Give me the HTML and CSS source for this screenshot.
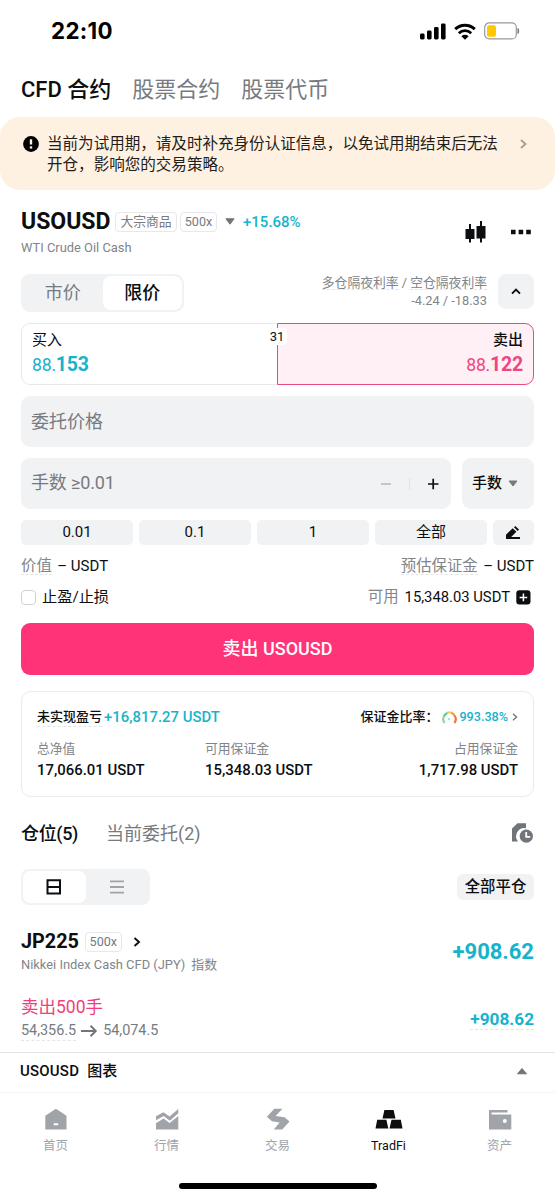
FILE: index.html
```html
<!DOCTYPE html>
<html lang="zh-CN">
<head>
<meta charset="utf-8">
<title>TradFi</title>
<link rel="stylesheet" href="styles.css">
</head>
<body>
<header class="status">
  <span class="time">22:10</span>
  <span class="status-icons">
    <svg width="26" height="17" viewBox="0 0 26 17"><rect x="0" y="10.5" width="4.6" height="6" rx="1.4"/><rect x="7" y="7.500" width="4.600" height="9" rx="1.400"/><rect x="14" y="4" width="4.600" height="12.500" rx="1.400"/><rect x="21" y="0.500" width="4.600" height="16" rx="1.400"/></svg>
    <svg width="22" height="17" viewBox="0 0 22 17"><path d="M1.200 6.200a14.200 14.200 0 0 1 19.600 0" fill="none" stroke="#000" stroke-width="3"/><path d="M4.800 10.200a9 9 0 0 1 12.400 0" fill="none" stroke="#000" stroke-width="2.800"/><path d="M7.400 13.200a5.200 5.200 0 0 1 7.200 0L11 16.800z"/></svg>
    <svg width="36" height="18" viewBox="0 0 36 18"><rect x="0.700" y="0.900" width="31.600" height="16" rx="4.500" fill="#fff" stroke="#999" stroke-width="1.200"/><rect x="3" y="3.200" width="9" height="11.500" rx="2" fill="#ffc800"/><path d="M34 6.500q1.600 2.500 0 5z" fill="#777" stroke="#777"/></svg>
  </span>
</header>

<nav class="top-tabs">
  <span class="top-tab active">CFD 合约</span><span class="top-tab">股票合约</span><span class="top-tab">股票代币</span>
</nav>

<section class="notice">
  <svg class="notice-icon" width="16" height="16" viewBox="0 0 16 16"><circle cx="8" cy="8" r="7.900"/><path d="M8 3.300v5.200" stroke="#fff3e4" stroke-width="2.400"/><path d="M8 10.300v2.300" stroke="#fff3e4" stroke-width="2.400"/></svg>
  <p class="notice-text">当前为试用期，请及时补充身份认证信息，以免试用期结束后无法<br>开仓，影响您的交易策略。</p>
  <svg class="notice-arrow" width="7" height="10" viewBox="0 0 7 10"><path d="M1 1l4.500 4L1 9" fill="none" stroke="#a29c95" stroke-width="1.700"/></svg>
</section>

<main class="content">
  <section class="symbol">
    <div>
      <div class="symbol-line">
        <h1 class="symbol-name">USOUSD</h1>
        <span class="tag tag-cat">大宗商品</span><span class="tag tag-lev">500x</span>
        <svg class="symbol-caret" width="10" height="7" viewBox="0 0 10 7"><path d="M1.200.8h7.600L5 5.800z" fill="#71757a" stroke="#71757a" stroke-width="1.200" stroke-linejoin="round"/></svg>
        <span class="change">+15.68%</span>
      </div>
      <div class="symbol-desc">WTI Crude Oil Cash</div>
    </div>
    <div class="symbol-actions">
      <svg width="21" height="22" viewBox="0 0 21 22"><path d="M.5 8h9v10h-9zM11.500 5h9v12.500h-9zM4 3h2v18.500H4zM15 0h2v21.500h-2z" fill="#0c0e10"/></svg>
      <svg width="20" height="6" viewBox="0 0 20 6"><path d="M0 .7h4.600v4.600H0zM7.600.7h4.600v4.600H7.600zM15.200.7h4.600v4.600h-4.600z" fill="#0c0e10"/></svg>
    </div>
  </section>

  <section class="mode">
    <div class="seg"><span class="seg-item">市价</span><span class="seg-item on">限价</span></div>
    <div class="rates">
      <div><span class="hint">多仓隔夜利率</span> / <span class="hint">空仓隔夜利率</span></div>
      <div class="rate-values">-4.24 / -18.33</div>
    </div>
    <button class="collapse"><svg width="10" height="7" viewBox="0 0 10 7"><path d="M1 5.700l4-4 4 4" fill="none" stroke="#0c0e10" stroke-width="1.900"/></svg></button>
  </section>

  <section class="sides">
    <div class="side buy"><span>买入</span><span class="price">88.<b>153</b></span></div>
    <div class="side sell"><span>卖出</span><span class="price">88.<b>122</b></span></div>
    <span class="spread">31</span>
  </section>

  <div class="field">委托价格</div>
  <div class="qty">
    <div class="field qty-field">
      <span class="qty-label">手数 ≥0.01</span>
      <svg width="58" height="14" viewBox="0 0 58 14"><path d="M0 7h10" stroke="#b5b9bd" stroke-width="1.500"/><path d="M28.500 1v12" stroke="#dfe1e4"/><path d="M47 7h10.500M52.200 1.700v10.600" stroke="#0c0e10" stroke-width="1.700"/></svg>
    </div>
    <div class="field unit">手数<svg width="10" height="7" viewBox="0 0 10 7"><path d="M1 1h8L5 6z" fill="#777b80" stroke="#777b80" stroke-width="1" stroke-linejoin="round"/></svg></div>
  </div>
  <div class="quick">
    <span>0.01</span><span>0.1</span><span>1</span><span>全部</span>
    <span><svg width="15" height="14" viewBox="0 0 15 14"><path d="M0 8.800L6.700 2.200l3.700 3.500-5.200 5.300H14V13H0zM8 1.200L9.200 0l3.800 3.600-1.300 1.300z" fill="#0c0e10"/></svg></span>
  </div>
  <div class="row value-row">
    <div><span class="hint muted">价值</span><span class="usdt">– USDT</span></div>
    <div><span class="hint muted">预估保证金</span><span class="usdt">– USDT</span></div>
  </div>
  <div class="row tp-row">
    <div class="check"><i class="box"></i>止盈/止损</div>
    <div class="avail"><span class="muted">可用</span><span class="avail-num">15,348.03 USDT</span><svg width="15" height="15" viewBox="0 0 15 15"><rect x=".3" y=".3" width="14.200" height="14.200" rx="3" fill="#0c0e10"/><path d="M7.400 3.600v7.600M3.600 7.400h7.600" stroke="#fff" stroke-width="1.500"/></svg></div>
  </div>
  <button class="submit">卖出 USOUSD</button>

  <section class="account">
    <div class="account-top">
      <div class="pnl"><span class="hint">未实现盈亏</span><span class="pnl-num">+16,817.27 USDT</span></div>
      <div class="ratio">保证金比率：<svg class="gauge" width="15" height="13" viewBox="0 0 15 13"><g fill="none" stroke-width="2.200"><path d="M2.600 12A6 6 0 0 1 2.200 5" stroke="#93d4a5"/><path d="M2 5.400A6 6 0 0 1 5.600 1.700" stroke="#62c88a"/><path d="M5.200 1.800A6 6 0 0 1 10 2" stroke="#f2cf57"/><path d="M9.500 1.700A6 6 0 0 1 12.900 5.500" stroke="#f49a42"/><path d="M12.800 5A6 6 0 0 1 12.400 12" stroke="#e9763d"/></g><circle cx="7" cy="8" r="1" fill="#9ad9bb"/></svg><span class="ratio-num">993.38%</span><svg width="6" height="8" viewBox="0 0 6 8"><path d="M1 .8L4.500 4 1 7.200" fill="none" stroke="#777b80" stroke-width="1.500"/></svg></div>
    </div>
    <div class="stats">
      <div><span class="stat-label">总净值</span><span class="stat-num">17,066.01 USDT</span></div>
      <div><span class="stat-label">可用保证金</span><span class="stat-num">15,348.03 USDT</span></div>
      <div class="end"><span class="stat-label">占用保证金</span><span class="stat-num">1,717.98 USDT</span></div>
    </div>
  </section>

  <section class="pos-tabs">
    <span class="pos-tab on">仓位(5)</span><span class="pos-tab">当前委托(2)</span>
    <svg class="history" width="22" height="21" viewBox="0 0 22 21"><path d="M0 18.500V5.500L5.500.3H14v5A8.200 8.200 0 0 0 6 18.500z" fill="#71757a"/><circle cx="14.300" cy="13.200" r="6.600" fill="#71757a"/><path d="M14.200 9v4.800h4" fill="none" stroke="#fff" stroke-width="1.800"/></svg>
  </section>

  <section class="view-bar">
    <div class="view-seg">
      <span class="view-item on"><svg width="16" height="16" viewBox="0 0 16 16"><path d="M1.500 1.200h12.500v13.300H1.500zM1.500 7.900H14" fill="none" stroke="#0c0e10" stroke-width="2"/></svg></span>
      <span class="view-item"><svg width="14" height="14" viewBox="0 0 14 14"><path d="M0 1.400h14M0 7h14M0 12.600h14" stroke="#a0a4a9" stroke-width="1.900"/></svg></span>
    </div>
    <button class="close-all">全部平仓</button>
  </section>

  <section class="position">
    <div>
      <div class="pos-head"><h2 class="pos-name">JP225</h2><span class="tag tag-lev">500x</span><svg width="8" height="10" viewBox="0 0 8 10"><path d="M1.500 1l4.500 4-4.500 4" fill="none" stroke="#0c0e10" stroke-width="1.900"/></svg></div>
      <div class="pos-desc"><span>Nikkei Index Cash CFD (JPY)</span><span>指数</span></div>
    </div>
    <div class="pos-pnl">+908.62</div>
  </section>
  <section class="leg">
    <div>
      <div class="leg-side">卖出500手</div>
      <div class="leg-prices"><span class="hint">54,356.5</span><svg width="17" height="12" viewBox="0 0 17 12"><path d="M0 6h14.500M9.500.8L14.800 6 9.500 11.200" fill="none" stroke="#71757a" stroke-width="1.900"/></svg><span>54,074.5</span></div>
    </div>
    <div class="leg-pnl hint">+908.62</div>
  </section>
</main>

<section class="chart-bar"><span><span class="chart-sym">USOUSD</span>图表</span><svg width="12" height="8" viewBox="0 0 12 8"><path d="M1.500 6.800h9L6 1.500z" fill="#71757a" stroke="#71757a" stroke-linejoin="round"/></svg></section>

<nav class="tabbar">
  <span class="tabbar-item"><svg width="24" height="24" viewBox="0 0 24 24"><path d="M1.300 7.800L12 .800l10.500 7V21.500H1.300zM9.700 15.200h4.500v2.100H9.700z" fill="#a0a4a9" fill-rule="evenodd"/></svg>首页</span>
  <span class="tabbar-item"><svg width="24" height="24" viewBox="0 0 24 24"><path d="M1 12.200v-3.900L8.500 4.300l6 4.200L23.300 1v4.200l-8.500 7.500L8.700 7.900zM1 21.500v-6.300l7.500-4.700 6.200 4.500 8.600-7v13.500z" fill="#a0a4a9"/></svg>行情</span>
  <span class="tabbar-item"><svg width="24" height="24" viewBox="0 0 24 24"><path d="M16.500.8H8.300L.9 8.800 6 13.200l7.600 1.400L7.800 21.500H16.200L23.500 13.600 18.500 9.200 9.600 8.100z" fill="#a0a4a9"/></svg>交易</span>
  <span class="tabbar-item on"><svg width="28" height="24" viewBox="0 0 28 24"><path d="M9.400 2h9.200l1.900 8.500h-13zM2.200 11.700h9.200L13.300 20.400H.5zM16.500 11.700h9.300L27.500 20.400h-13z" fill="#0c0e10"/></svg>TradFi</span>
  <span class="tabbar-item"><svg width="24" height="24" viewBox="0 0 24 24"><path d="M1 2h18.500v2.400H3.500v2H23.300V21.500H1zM16.800 11a2 2 0 1 0 0 4 2 2 0 0 0 0-4z" fill="#a0a4a9" fill-rule="evenodd"/></svg>资产</span>
</nav>
<div class="home-bar"></div>
</body>
</html>
```
FILE: styles.css
```css
* { box-sizing: border-box; margin: 0; }
body {
  width: 555px;
  height: 1200px;
  overflow: hidden;
  background: #fff;
  color: #0c0e10;
  font-family: Roboto, "Noto Sans CJK SC", sans-serif;
  font-size: 15px;
  line-height: 20px;
  display: flex;
  flex-direction: column;
  white-space: nowrap;
}
svg { display: block; flex: none; }
button { border: 0; padding: 0; font: inherit; color: inherit; }
.muted { color: #81858a; font-size: 15.4px; }
.hint { position: relative; }
.hint::after {
  content: "";
  position: absolute;
  left: 0;
  right: 0;
  bottom: 0;
  border-bottom: 1px dashed #e3e5e7;
}

.status { height: 64px; flex: none; display: flex; justify-content: space-between; align-items: center; padding: 0 35px 2px 51px; }
.time { font: 700 22.3px/24px Inter, sans-serif; letter-spacing: 0.35px; color: #000; }
.status-icons { display: flex; align-items: center; gap: 8px; }

.top-tabs { height: 53px; flex: none; display: flex; align-items: center; gap: 21px; padding: 0 21px 1px; font-size: 22px; color: #777b80; }
.top-tab.active { color: #0c0e10; font-weight: 500; }

.notice { height: 73px; flex: none; display: flex; align-items: flex-start; padding: 17px 28px 0 23px; background: #fff1e1; border-radius: 20px; }
.notice-icon { margin: 2px 8px 0 0; }
.notice-text { flex: 1; font-size: 15.55px; line-height: 21px; color: #221d18; }
.notice-arrow { margin-top: 5px; }

.content { flex: none; height: 862px; padding: 19px 21px 0; display: flex; flex-direction: column; }

.symbol { height: 65px; display: flex; justify-content: space-between; }
.symbol-line { display: flex; align-items: center; height: 25px; }
.symbol-name { font-size: 23px; font-weight: 700; width: 94px; }
.tag { height: 20px; border: 1px solid #e6e8ea; border-radius: 4px; font-size: 12.8px; line-height: 18px; color: #777b80; text-align: center; }
.tag-cat { width: 62px; margin-right: 3px; }
.tag-lev { width: 37px; font-size: 12.6px; }
.symbol-caret { margin: 0 8px; }
.change { font-size: 15px; font-weight: 500; color: #17b3cc; }
.symbol-desc { font-size: 12.9px; color: #81858a; line-height: 27px; }
.symbol-actions { display: flex; align-items: center; gap: 25px; height: 46px; padding-right: 3px; }

.mode { display: flex; height: 49px; align-items: flex-start; }
.seg { width: 163px; height: 38px; padding: 2px; border-radius: 9px; background: #f1f2f4; display: flex; font-size: 18px; }
.seg-item { flex: 1; line-height: 34px; text-align: center; color: #777b80; }
.seg-item.on { background: #fff; color: #0c0e10; font-weight: 500; border-radius: 8px; }
.rates { margin-left: auto; text-align: right; font-size: 12.8px; line-height: 18px; color: #81858a; }
.collapse { width: 36px; height: 35px; margin-left: 11px; border-radius: 8px; background: #f1f2f4; display: grid; place-items: center; }

.sides { position: relative; display: grid; grid-template-columns: 256px 257px; height: 62px; margin-bottom: 11px; }
.side { padding: 5px 10px; line-height: 22px; display: flex; flex-direction: column; gap: 3px; }
.buy { border: 1px solid #e6e8ea; border-right: 0; border-radius: 9px 0 0 9px; }
.sell { border: 1.500px solid #e74b82; border-radius: 0 9px 9px 0; background: #fff0f5; text-align: right; font-weight: 500; }
.price { font-size: 17.6px; font-weight: 400; color: #17b3cc; letter-spacing: -0.2px; }
.price b { font-size: 19.500px; font-weight: 700; }
.sell .price { color: #ef4682; }
.spread { position: absolute; left: 246px; top: 5px; width: 20px; height: 17px; border-radius: 4px; background: #fff; font-size: 13px; line-height: 17px; text-align: center; }

.field { height: 51px; flex: none; border-radius: 9px; background: #f1f2f4; padding: 0 10px; font-size: 18px; line-height: 51px; color: #777b80; }
.qty { display: flex; gap: 11px; margin: 11px 0; height: 51px; flex: none; }
.qty-field { flex: 1; display: flex; align-items: center; justify-content: space-between; padding-right: 12px; }
.qty-label { line-height: 24px; padding-bottom: 1px; letter-spacing: -0.15px; }
.unit { width: 72px; display: flex; align-items: center; gap: 6px; font-size: 15px; font-weight: 500; color: #0c0e10; }

.quick { display: grid; grid-template-columns: repeat(4, 1fr) 41px; gap: 6px; height: 25px; flex: none; }
.quick span { background: #f1f2f4; border-radius: 5px; display: grid; place-items: center; line-height: 25px; }
.row { display: flex; justify-content: space-between; align-items: center; flex: none; }
.value-row { height: 41px; }
.usdt { margin-left: 5.5px; }
.tp-row { height: 22px; margin-bottom: 15px; }
.check, .avail { display: flex; align-items: center; }
.check { font-size: 15.2px; }
.box { width: 15px; height: 15px; border: 1px solid #cfd2d5; border-radius: 4px; margin-right: 6px; }
.avail-num { margin: 0 6px; font-size: 14.8px; }
.avail { padding-right: 3px; }
.submit { height: 52px; flex: none; border-radius: 9px; background: #ff3378; color: #fff; font-size: 18px; font-weight: 500; }

.account { height: 106px; flex: none; margin-top: 16px; padding: 15px 15px 0; border: 1px solid #e9ebed; border-radius: 10px; }
.account-top { display: flex; justify-content: space-between; height: 32px; font-size: 13px; font-weight: 500; }
.pnl, .ratio { display: flex; align-items: center; height: 20px; }
.pnl-num { color: #17b3cc; font-size: 14.9px; margin-left: 2px; }
.gauge { margin: 0 2px 0 4px; }
.ratio-num { color: #17b3cc; margin-right: 4px; font-size: 12.600px; }
.stats { display: grid; grid-template-columns: 168px 1fr 1fr; }
.stats div { display: flex; flex-direction: column; line-height: 22px; }
.stats .end { text-align: right; }
.stat-label { font-size: 12.8px; color: #81858a; line-height: 19px; }
.stat-num { font-size: 14.9px; font-weight: 500; line-height: 24px; }

.pos-tabs { display: flex; align-items: center; height: 71px; flex: none; gap: 28px; padding-top: 2px; font-size: 18px; color: #777b80; }
.pos-tab.on { color: #0c0e10; font-weight: 500; letter-spacing: -0.35px; }
.history { margin-left: auto; }

.view-bar { display: flex; justify-content: space-between; align-items: center; height: 38px; flex: none; }
.view-seg { width: 129px; height: 36px; padding: 2px; background: #f1f2f4; border-radius: 8px; display: flex; }
.view-item { flex: 1; display: grid; place-items: center; border-radius: 7px; }
.view-item.on { background: #fff; }
.close-all { width: 77px; height: 26px; border-radius: 6px; background: #f1f2f4; font-size: 15.4px; font-weight: 500; line-height: 26px; }

.position { display: flex; justify-content: space-between; align-items: center; height: 48px; margin-top: 23px; flex: none; }
.pos-head { display: flex; align-items: center; height: 24px; }
.pos-name { font-size: 19.8px; font-weight: 700; margin-right: 6px; }
.pos-head svg { margin-left: 11px; }
.pos-desc { display: flex; gap: 6px; font-size: 12.9px; color: #81858a; line-height: 22px; }
.pos-pnl { font-size: 22px; font-weight: 700; color: #17b3cc; line-height: 46px; padding-bottom: 3px; }
.leg { display: flex; justify-content: space-between; align-items: flex-start; height: 48px; margin-top: 18px; flex: none; }
.leg-side { font-size: 17.500px; line-height: 24px; color: #ee3f7c; }
.leg-prices { display: flex; align-items: center; gap: 5px; font-size: 14.400px; line-height: 24px; color: #777b80; }
.leg-prices .hint::after { bottom: 2px; }
.leg-pnl { font-size: 17.200px; font-weight: 700; color: #17b3cc; line-height: 22px; margin-top: 13px; }

.chart-bar { height: 41px; flex: none; display: flex; align-items: center; justify-content: space-between; padding: 0 27px 3px 20px; border-top: 1px solid #e3e5e7; border-bottom: 1px solid #f3f4f5; font-weight: 500; }
.chart-sym { margin-right: 8px; letter-spacing: 0.2px; }

.tabbar { height: 90px; flex: none; display: grid; grid-template-columns: repeat(5, 1fr); padding-top: 15px; }
.tabbar-item { display: flex; flex-direction: column; align-items: center; gap: 4px; font-size: 12.500px; line-height: 20px; color: #a0a4a9; }
.tabbar-item.on { color: #0c0e10; }
.home-bar { width: 198px; height: 6px; flex: none; margin-left: 179px; border-radius: 3px; background: #000; }
```
